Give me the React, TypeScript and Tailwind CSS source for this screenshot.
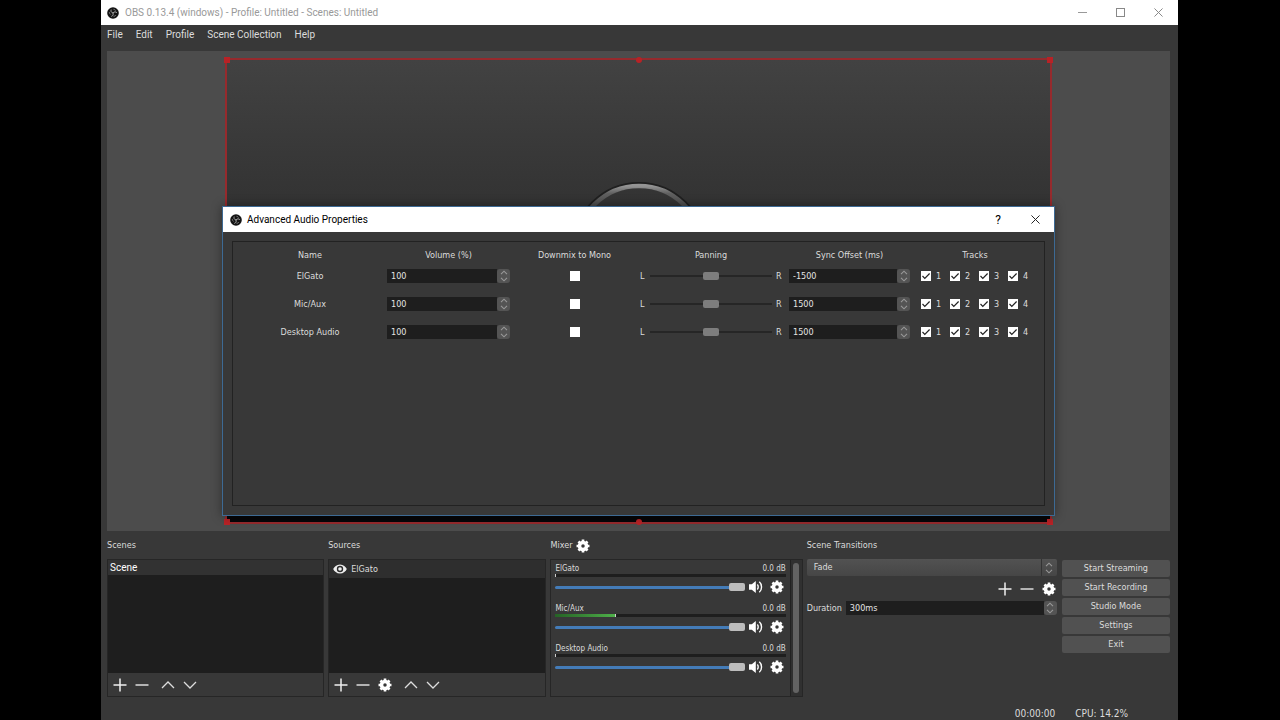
import React, { useState } from "react";

const tahoma = "font-['DejaVu_Sans_Condensed','DejaVu_Sans',sans-serif]";
const segoe = "font-['Roboto','Open_Sans',sans-serif]";

interface AudioSource {
  name: string;
  volume: string;
  offset: string;
}

interface MixerSource {
  name: string;
  level: number;
}

const audioSources: AudioSource[] = [
  { name: "ElGato", volume: "100", offset: "-1500" },
  { name: "Mic/Aux", volume: "100", offset: "1500" },
  { name: "Desktop Audio", volume: "100", offset: "1500" },
];

const mixerSources: MixerSource[] = [
  { name: "ElGato", level: 0 },
  { name: "Mic/Aux", level: 26 },
  { name: "Desktop Audio", level: 0 },
];

const menus = ["File", "Edit", "Profile", "Scene Collection", "Help"];
const actions = [
  "Start Streaming",
  "Start Recording",
  "Studio Mode",
  "Settings",
  "Exit",
];

const Logo = () => (
  <svg viewBox="0 0 12 12" className="size-[12px]" fill="none" stroke="#a8a8a8" strokeWidth="1">
    <circle cx="6" cy="6" r="5.8" fill="#141414" stroke="none" />
    <path d="M6 6C4.200 5.600 3.600 4.200 4.200 2.600M6 6c1.200-1.400 2.700-1.500 3.900-.3M6 6c.6 1.700-.1 3-1.700 3.400" />
    <path d="M2.300 5.200c0 1 .5 1.700 1.200 2.100M6.500 2.300c1 .1 1.600.6 2 1.300M8.800 8.300c-.6.700-1.300 1-2.200 1" strokeWidth=".7" />
  </svg>
);

const Gear = () => (
  <svg viewBox="0 0 16 16" className="size-[14px]" fill="none" stroke="#fff">
    <circle cx="8" cy="8" r="4" strokeWidth="4" />
    <path
      d="M8 .6v3M8 12.400v3M.6 8h3M12.400 8h3M2.800 2.800 5 5M11 11l2.200 2.200M13.200 2.800 11 5M5 11l-2.200 2.200"
      strokeWidth="3"
    />
  </svg>
);

const Plus = () => (
  <svg viewBox="0 0 14 14" className="size-[14px]" stroke="#eee" strokeWidth="1.5">
    <path d="M7 .5v13M.5 7h13" />
  </svg>
);

const Minus = () => (
  <svg viewBox="0 0 14 14" className="size-[14px]" stroke="#ddd" strokeWidth="1.5">
    <path d="M.5 7h13" />
  </svg>
);

const Up = () => (
  <svg viewBox="0 0 14 14" className="size-[14px]" fill="none" stroke="#ddd" strokeWidth="1.3">
    <path d="m1 10 6-6 6 6" />
  </svg>
);

const Down = () => (
  <svg viewBox="0 0 14 14" className="size-[14px]" fill="none" stroke="#ddd" strokeWidth="1.3">
    <path d="m1 4 6 6 6-6" />
  </svg>
);

const Speaker = () => (
  <svg viewBox="0 0 14 14" className="size-[14px]" fill="none" stroke="#fff" strokeWidth="1.4">
    <path d="M0 4.200h2.800L6.800 1v12L2.800 9.800H0z" fill="#fff" stroke="none" />
    <path d="M8.300 4.600c1.200 1.200 1.200 3.600 0 4.800M10.300 1.800c3 2.600 3 7.800 0 10.400" />
  </svg>
);

const Eye = () => (
  <svg viewBox="0 0 14 10" className="h-[10px] w-[14px]">
    <path d="M7 .4C3.600.4 1.200 2.800.2 5c1 2.200 3.400 4.600 6.800 4.600s5.800-2.400 6.800-4.600C12.800 2.800 10.400.4 7 .4z" fill="#eee" />
    <circle cx="7" cy="5" r="3.200" fill="#2c2c2c" />
    <circle cx="7" cy="5" r="1.800" fill="#eee" />
  </svg>
);

const Close = ({ color }: { color: string }) => (
  <svg viewBox="0 0 10 10" className="size-[9px]" stroke={color} strokeWidth="1.1">
    <path d="m.5.5 9 9M9.500.5l-9 9" />
  </svg>
);

const Arrow = ({ down }: { down?: boolean }) => (
  <svg viewBox="0 0 8 5" className="h-[5px] w-[8px]" fill="none" stroke="#999" strokeWidth="1.1">
    <path d={down ? "m1 .8 3 3 3-3" : "m1 4.200 3-3 3 3"} />
  </svg>
);

const IconButton: React.FC<{ label: string; children: React.ReactNode }> = ({
  label,
  children,
}) => (
  <button aria-label={label} className="flex size-4 items-center justify-center">
    {children}
  </button>
);

const SpinBox: React.FC<{ label: string; id: string; value: string }> = ({
  label,
  id,
  value,
}) => {
  const [text, setText] = useState(value);
  const step = (by: number) => {
    const unit = text.replace(/^-?\d+/, "");
    setText(`${parseInt(text, 10) + by}${unit}`);
  };

  return (
    <div className="flex h-[14px] min-w-0 flex-1">
      <input
        id={id}
        aria-label={label}
        value={text}
        onChange={(e) => setText(e.target.value)}
        className="min-w-0 flex-1 bg-[#1e1e1e] pl-1 pt-px text-[9px] leading-[13px] text-[#e4e4e4] outline-none"
      />
      <div className="flex w-[13px] flex-col items-center overflow-hidden rounded-[3px] bg-[#545454]">
        <button aria-label={`Increase ${label}`} className="flex h-[7px] items-center" onClick={() => step(1)}>
          <Arrow />
        </button>
        <button aria-label={`Decrease ${label}`} className="flex h-[7px] items-center" onClick={() => step(-1)}>
          <Arrow down />
        </button>
      </div>
    </div>
  );
};

const TrackBox: React.FC<{ source: string; track: number }> = ({ source, track }) => (
  <label className="flex items-center gap-[5px]">
    <span className="grid size-[10px]">
      <input
        type="checkbox"
        defaultChecked
        aria-label={`${source} track ${track}`}
        className="peer col-start-1 row-start-1 size-[10px] appearance-none bg-white"
      />
      <svg
        viewBox="0 0 10 10"
        className="pointer-events-none invisible col-start-1 row-start-1 size-[10px] peer-checked:visible"
        fill="none"
        stroke="#222"
        strokeWidth="1.2"
      >
        <path d="m1.500 5 2.300 2.300L8.600 2.500" />
      </svg>
    </span>
    <span className="w-[6px] pt-px">{track}</span>
  </label>
);

const AudioRow: React.FC<{ source: AudioSource }> = ({ source }) => (
  <tr className="h-7">
    <td className="pt-px text-center">{source.name}</td>
    <td className="px-[3px]">
      <SpinBox id={`${source.name}-volume`} label={`${source.name} volume`} value={source.volume} />
    </td>
    <td>
      <input
        type="checkbox"
        aria-label={`Downmix ${source.name} to mono`}
        className="mx-auto block size-[10px] appearance-none bg-white checked:border-2 checked:border-white checked:bg-[#222]"
      />
    </td>
    <td className="px-1">
      <div className="flex items-center gap-1">
        <span className="w-[6px] pt-px">L</span>
        <input
          type="range"
          aria-label={`${source.name} panning`}
          className="h-2 min-w-0 flex-1 appearance-none bg-transparent [&::-webkit-slider-runnable-track]:h-[2px] [&::-webkit-slider-runnable-track]:bg-[#262626] [&::-webkit-slider-thumb]:-mt-[3px] [&::-webkit-slider-thumb]:h-2 [&::-webkit-slider-thumb]:w-4 [&::-webkit-slider-thumb]:appearance-none [&::-webkit-slider-thumb]:rounded-[2px] [&::-webkit-slider-thumb]:bg-[#7d7d7d]"
        />
        <span className="w-[6px] pt-px">R</span>
      </div>
    </td>
    <td className="px-[3px]">
      <SpinBox id={`${source.name}-offset`} label={`${source.name} sync offset`} value={source.offset} />
    </td>
    <td>
      <div className="flex justify-center gap-2">
        {[1, 2, 3, 4].map((track) => (
          <TrackBox key={track} source={source.name} track={track} />
        ))}
      </div>
    </td>
  </tr>
);

const AudioDialog = () => (
  <div
    role="dialog"
    aria-label="Advanced Audio Properties"
    className="absolute inset-x-[115px] top-[155px] flex h-[310px] flex-col border border-[#3d6a94] bg-[#383838] shadow-[0_0_10px_rgba(0,0,0,0.4)]"
  >
    <div className={`flex h-[25px] shrink-0 items-center bg-white pl-[7px] pr-[14px] text-black ${segoe}`}>
      <Logo />
      <span className="ml-[5px] flex-1 text-[10px]">Advanced Audio Properties</span>
      <button aria-label="Help" className="mr-[30px] text-[12px]">
        ?
      </button>
      <button aria-label="Close">
        <Close color="#222" />
      </button>
    </div>
    <div className="mx-[9px] mb-[9px] mt-[9px] flex-1 border border-[#222] pl-[3px] pr-2 pt-[6px]">
      <table className="w-full table-fixed border-collapse">
        <colgroup>
          <col className="w-[148px]" />
          <col className="w-[129px]" />
          <col className="w-[123px]" />
          <col className="w-[150px]" />
          <col className="w-[127px]" />
          <col className="w-[124px]" />
        </colgroup>
        <thead>
          <tr className="h-[14px] leading-[14px]">
            {["Name", "Volume (%)", "Downmix to Mono", "Panning", "Sync Offset (ms)", "Tracks"].map((head) => (
              <th key={head} className="font-normal">
                {head}
              </th>
            ))}
          </tr>
        </thead>
        <tbody>
          {audioSources.map((source) => (
            <AudioRow key={source.name} source={source} />
          ))}
        </tbody>
      </table>
    </div>
  </div>
);

const MixerRow: React.FC<{ source: MixerSource }> = ({ source }) => {
  const [volume, setVolume] = useState(100);

  return (
    <div className="h-10">
      <div className="flex h-[12px] items-center justify-between pt-px text-[8px]">
        <span>{source.name}</span>
        <span>0.0 dB</span>
      </div>
      <div className="flex h-[3px] items-center bg-[#1e1e1e]">
        <div
          className="h-[3px] bg-linear-to-r from-[#256325] to-[#4fb04a]"
          style={{ width: `${source.level}%` }}
        />
        <div className="h-[3px] w-px bg-[#ccc]" />
      </div>
      <div className="flex h-[20px] items-center">
        <input
          type="range"
          aria-label={`${source.name} level`}
          value={volume}
          onChange={(e) => setVolume(Number(e.target.value))}
          className="h-[3px] min-w-0 flex-1 appearance-none rounded-full [&::-webkit-slider-thumb]:h-2 [&::-webkit-slider-thumb]:w-4 [&::-webkit-slider-thumb]:appearance-none [&::-webkit-slider-thumb]:rounded-[2px] [&::-webkit-slider-thumb]:bg-[#bdbdbd]"
          style={{
            background: `linear-gradient(to right, #447cb8 ${volume}%, #1e1e1e ${volume}%)`,
          }}
        />
        <div className="ml-[3px] mr-px flex gap-[5px]">
          <IconButton label={`Mute ${source.name}`}>
            <Speaker />
          </IconButton>
          <IconButton label={`${source.name} settings`}>
            <Gear />
          </IconButton>
        </div>
      </div>
    </div>
  );
};

const Preview = () => (
  <div className="relative ml-[6px] mr-2 h-[480px] bg-[#4c4c4c] px-[118px] pt-[7px]">
    <div className="relative flex h-[466px] flex-col justify-between border-2 border-[#962a2d] bg-linear-to-b from-[#424242] to-[#313131] to-35%">
      <svg viewBox="0 0 134 134" className="mx-auto mt-[122px] size-[134px]" fill="none">
        <defs>
          <linearGradient id="ring" x1="0" y1="0" x2="0" y2="1">
            <stop offset="0" stopColor="#949494" />
            <stop offset=".06" stopColor="#606060" />
            <stop offset=".2" stopColor="#444" />
          </linearGradient>
        </defs>
        <circle cx="67" cy="67" r="64" stroke="#1f1f1f" strokeWidth="6" />
        <circle cx="67" cy="67" r="63" stroke="url(#ring)" strokeWidth="4.500" />
      </svg>
      <div className="h-2 bg-[#050508]" />
      {/* resize handles */}
      <i className="absolute -left-[3px] -top-[3px] size-[6px] bg-[#b82226]" />
      <i className="absolute -top-[3px] left-1/2 size-[6px] -translate-x-1/2 rounded-full bg-[#b82226]" />
      <i className="absolute -right-[3px] -top-[3px] size-[6px] bg-[#b82226]" />
      <i className="absolute -bottom-[3px] -left-[3px] size-[6px] bg-[#b82226]" />
      <i className="absolute -bottom-[3px] left-1/2 size-[6px] -translate-x-1/2 rounded-full bg-[#b82226]" />
      <i className="absolute -bottom-[3px] -right-[3px] size-[6px] bg-[#b82226]" />
    </div>
    <AudioDialog />
  </div>
);

const DockTitle: React.FC<{ children: React.ReactNode }> = ({ children }) => (
  <h2 className="flex h-[28px] items-center gap-[3px] pt-[2px]">{children}</h2>
);

const App: React.FC = () => {
  return (
    <div className="min-h-screen bg-black pl-[101px] pr-[102px]">
      <div className={`flex min-h-screen flex-col bg-[#383838] text-[9px] text-[#dcdcdc] ${tahoma}`}>
        <header className={`flex h-[25px] items-center bg-white pl-[6px] pr-[15px] text-[#999] ${segoe}`}>
          <Logo />
          <h1 className="ml-[6px] flex-1 text-[10px]">
            OBS 0.13.4 (windows) - Profile: Untitled - Scenes: Untitled
          </h1>
          <div className="flex items-center gap-[29px]">
            <button aria-label="Minimize" className="h-px w-[9px] bg-[#999]" />
            <button aria-label="Maximize" className="size-[9px] border border-[#888]" />
            <button aria-label="Close">
              <Close color="#888" />
            </button>
          </div>
        </header>
        <nav className={`flex h-[26px] gap-[13px] pl-[6px] pt-[2px] text-[10px] leading-[15px] ${segoe}`}>
          {menus.map((menu) => (
            <button key={menu} className="h-[15px]">
              {menu}
            </button>
          ))}
        </nav>

        <Preview />

        <main className="ml-[6px] mr-2 grid grid-cols-[217fr_218fr_252fr_251fr_108fr] gap-x-1">
          <section>
            <DockTitle>Scenes</DockTitle>
            <div className="flex h-[138px] flex-col border border-[#262626]">
              <ul className="flex-1 bg-[#1e1e1e]">
                <li className={`h-[15px] bg-[#323232] pl-[2px] text-[10px] leading-[15px] text-white ${segoe}`}>
                  Scene
                </li>
              </ul>
              <div className="flex h-[23px] items-center gap-[6px] pl-1">
                <IconButton label="Add scene">
                  <Plus />
                </IconButton>
                <IconButton label="Remove scene">
                  <Minus />
                </IconButton>
                <div className="ml-1 flex gap-[6px]">
                  <IconButton label="Move scene up">
                    <Up />
                  </IconButton>
                  <IconButton label="Move scene down">
                    <Down />
                  </IconButton>
                </div>
              </div>
            </div>
          </section>

          <section>
            <DockTitle>Sources</DockTitle>
            <div className="flex h-[138px] flex-col border border-[#262626]">
              <ul className="flex-1 bg-[#1e1e1e]">
                <li className="flex h-[18px] items-center gap-1 bg-[#2e2e2e] pl-1">
                  <Eye />
                  <span className="pt-px">ElGato</span>
                </li>
              </ul>
              <div className="flex h-[23px] items-center gap-[6px] pl-1">
                <IconButton label="Add source">
                  <Plus />
                </IconButton>
                <IconButton label="Remove source">
                  <Minus />
                </IconButton>
                <IconButton label="Source properties">
                  <Gear />
                </IconButton>
                <div className="ml-1 flex gap-[6px]">
                  <IconButton label="Move source up">
                    <Up />
                  </IconButton>
                  <IconButton label="Move source down">
                    <Down />
                  </IconButton>
                </div>
              </div>
            </div>
          </section>

          <section>
            <DockTitle>
              Mixer
              <IconButton label="Advanced audio properties">
                <Gear />
              </IconButton>
            </DockTitle>
            <div className="flex h-[138px] border border-[#262626]">
              <div className="flex-1 pl-1 pr-1 pt-[2px]">
                {mixerSources.map((source) => (
                  <MixerRow key={source.name} source={source} />
                ))}
              </div>
              <div className="flex w-3 justify-center border-l border-[#222] bg-[#303030] py-[3px]">
                <div className="w-[6px] rounded-full bg-[#636363]" />
              </div>
            </div>
          </section>

          <section className="pr-[1px]">
            <DockTitle>Scene Transitions</DockTitle>
            <div className="flex h-[17px] overflow-hidden rounded-[2px] bg-linear-to-b from-[#525252] to-[#464646]">
              <select
                aria-label="Scene transition"
                defaultValue="Fade"
                className="min-w-0 flex-1 appearance-none bg-transparent pl-[7px] leading-[17px] outline-none"
              >
                <option>Fade</option>
                <option>Cut</option>
              </select>
              <span className="flex w-4 flex-col items-center justify-center gap-[2px] border-l border-[#333]">
                <Arrow />
                <Arrow down />
              </span>
            </div>
            <div className="flex h-[25px] items-center justify-end gap-[6px]">
              <IconButton label="Add transition">
                <Plus />
              </IconButton>
              <IconButton label="Remove transition">
                <Minus />
              </IconButton>
              <IconButton label="Transition properties">
                <Gear />
              </IconButton>
            </div>
            <div className="flex items-center gap-1">
              <label htmlFor="duration" className="pt-px">
                Duration
              </label>
              <SpinBox id="duration" label="Duration" value="300ms" />
            </div>
          </section>

          <section className="flex flex-col gap-[2px] pt-[29px]">
            {actions.map((action) => (
              <button key={action} className="h-[17px] rounded-[2px] bg-[#515151] leading-[17px]">
                {action}
              </button>
            ))}
          </section>
        </main>

        <footer className="mt-auto flex h-[14px] items-center justify-end gap-5 pr-[50px] text-[10px]">
          <span>00:00:00</span>
          <span>CPU: 14.2%</span>
        </footer>
      </div>
    </div>
  );
};

export default App;
